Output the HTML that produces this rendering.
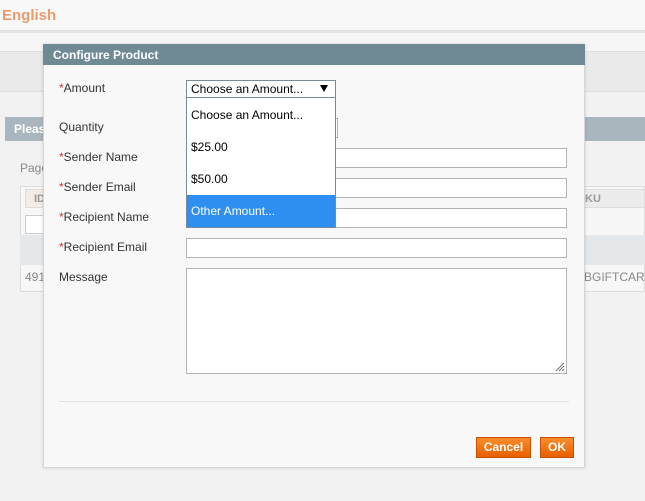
<!DOCTYPE html>
<html><head><style>
*{margin:0;padding:0;box-sizing:border-box}
body{width:645px;height:501px;overflow:hidden;background:#f2f2f2;font-family:"Liberation Sans",Arial,sans-serif;font-size:12px;color:#333;position:relative}
.a{position:absolute}
.lbl{position:absolute;left:59px;font-size:12px;color:#333}
.lbl b{color:#c0392b;font-weight:normal}
.inp{position:absolute;left:186px;width:381px;height:20px;background:#fff;border:1px solid #b4b4b4}
.btn{position:absolute;top:437px;height:21px;background:linear-gradient(#f98c2a,#e85f00);border:1px solid #c45000;color:#fff;font-weight:bold;font-size:12px;text-align:center;line-height:19px}
</style></head><body>
<div class="a" style="left:0;top:0;width:645px;height:30px;background:#f8f8f8"></div>
<div class="a" style="left:2px;top:7px;font-size:15px;font-weight:bold;color:#eb9a6c">English</div>
<div class="a" style="left:0;top:30px;width:645px;height:3px;background:#e3e3e3"></div>
<div class="a" style="left:0;top:33px;width:645px;height:18px;background:#f6f6f6"></div>
<div class="a" style="left:0;top:51px;width:645px;height:41px;background:#eaeaea;border-top:1px solid #ddd;border-bottom:1px solid #ddd"></div>
<div class="a" style="left:5px;top:117px;width:640px;height:24px;background:#a9b6bd"></div>
<div class="a" style="left:14px;top:122px;color:#fff;font-weight:bold">Pleas</div>
<div class="a" style="left:20px;top:161px;color:#888;font-size:12px">Page</div>
<div class="a" style="left:20px;top:186px;width:625px;height:106px;border:1px solid #ddd;background:#f7f7f7"></div>
<div class="a" style="left:25px;top:189px;width:620px;height:19px;background:#ececec;border:1px solid #ddd"></div>
<div class="a" style="left:25px;top:189px;width:20px;height:19px;background:#f3ebe6;border:1px solid #ddd"></div>
<div class="a" style="left:34px;top:193px;color:#999;font-weight:bold;font-size:11px">ID</div>
<div class="a" style="left:585px;top:193px;color:#999;font-weight:bold;font-size:11px">KU</div>
<div class="a" style="left:25px;top:215px;width:25px;height:19px;background:#fff;border:1px solid #ccc"></div>
<div class="a" style="left:20px;top:235px;width:625px;height:30px;background:#e5e8ea"></div>
<div class="a" style="left:25px;top:270px;color:#888">491</div>
<div class="a" style="left:584px;top:270px;color:#888">BGIFTCAR</div>

<div class="a" style="left:43px;top:44px;width:542px;height:424px;background:#f8f8f8;border:1px solid #d6d6d6;box-shadow:0 0 3px rgba(0,0,0,.15)"></div>
<div class="a" style="left:43px;top:44px;width:542px;height:21px;background:#6f8a95"></div>
<div class="a" style="left:53px;top:48px;color:#fff;font-weight:bold;font-size:12px">Configure Product</div>

<div class="lbl" style="top:81px"><b>*</b>Amount</div>
<div class="lbl" style="top:120px">Quantity</div>
<div class="lbl" style="top:150px"><b>*</b>Sender Name</div>
<div class="lbl" style="top:180px"><b>*</b>Sender Email</div>
<div class="lbl" style="top:210px"><b>*</b>Recipient Name</div>
<div class="lbl" style="top:240px"><b>*</b>Recipient Email</div>
<div class="lbl" style="top:270px">Message</div>

<div class="a" style="left:300px;top:118px;width:38px;height:20px;background:#fff;border:1px solid #b4b4b4"></div>
<div class="inp" style="top:148px"></div>
<div class="inp" style="top:178px"></div>
<div class="inp" style="top:208px"></div>
<div class="inp" style="top:238px"></div>
<div class="inp" style="top:268px;height:106px"></div>
<svg class="a" style="left:555px;top:362px" width="10" height="10"><path d="M1 9L9 1M4 9L9 4M7 9L9 7" stroke="#777" stroke-width="1"/></svg>

<div class="a" style="left:186px;top:80px;width:150px;height:18px;background:#fff;border:1px solid #7a8a99"></div>
<div class="a" style="left:191px;top:82px;color:#000">Choose an Amount...</div>
<svg class="a" style="left:320px;top:85px" width="8" height="7"><path d="M0 0H8L4 7Z" fill="#000"/></svg>
<div class="a" style="left:186px;top:97px;width:150px;height:131px;background:#fff;border:1px solid #7a8a99"></div>
<div class="a" style="left:191px;top:108px;color:#000">Choose an Amount...</div>
<div class="a" style="left:191px;top:140px;color:#000">$25.00</div>
<div class="a" style="left:191px;top:172px;color:#000">$50.00</div>
<div class="a" style="left:187px;top:195px;width:148px;height:32px;background:#2f8ff0"></div>
<div class="a" style="left:191px;top:204px;color:#fff">Other Amount...</div>

<div class="a" style="left:59px;top:401px;width:510px;height:1px;background:#e2e2e2"></div>
<div class="btn" style="left:476px;width:55px">Cancel</div>
<div class="btn" style="left:540px;width:34px">OK</div>
</body></html>
